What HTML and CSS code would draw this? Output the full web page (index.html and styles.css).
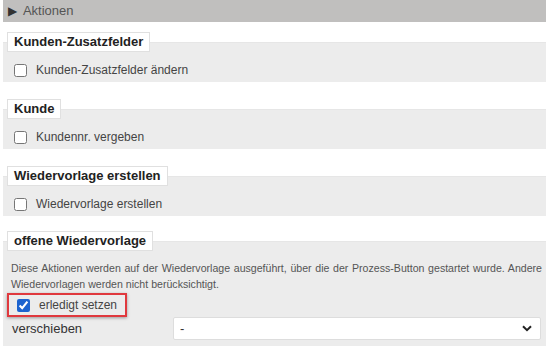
FILE: index.html
```html
<!DOCTYPE html>
<html lang="de">
<head>
  <meta charset="UTF-8" />
  <title>Aktionen</title>
  <link rel="stylesheet" href="styles.css">
</head>
<body>
  <div class="panel">
    <div class="panel-head"><span class="arrow">&#9654;</span> Aktionen</div>

    <div class="group group-first">
      <div class="legend">Kunden-Zusatzfelder</div>
      <div class="group-body">
        <label class="check-row"><input type="checkbox"> <span>Kunden-Zusatzfelder ändern</span></label>
      </div>
    </div>

    <div class="group">
      <div class="legend">Kunde</div>
      <div class="group-body">
        <label class="check-row"><input type="checkbox"> <span>Kundennr. vergeben</span></label>
      </div>
    </div>

    <div class="group">
      <div class="legend">Wiedervorlage erstellen</div>
      <div class="group-body">
        <label class="check-row"><input type="checkbox"> <span>Wiedervorlage erstellen</span></label>
      </div>
    </div>

    <div class="group group-last">
      <div class="legend">offene Wiedervorlage</div>
      <div class="group-body">
        <p class="hint">Diese Aktionen werden auf der Wiedervorlage ausgeführt, über die der Prozess-Button gestartet wurde. Andere Wiedervorlagen werden nicht berücksichtigt.</p>
        <div class="marked">
          <label class="check-row"><input type="checkbox" checked> <span>erledigt setzen</span></label>
        </div>
        <div class="field-row">
          <span class="field-label">verschieben</span>
          <div class="select-wrap">
            <select>
              <option>-</option>
            </select>
            <svg class="chevron" width="10" height="7" viewBox="0 0 10 7"><path d="M1 1.2 L5 5.2 L9 1.2" fill="none" stroke="#222" stroke-width="2"/></svg>
          </div>
        </div>
      </div>
    </div>
  </div>
</body>
</html>
```

FILE: styles.css
```css
body {
  margin: 0;
  font-family: 'Liberation Sans', Arial, sans-serif;
  color: #333;
  background: #fff;
}

.panel {
  margin-left: 3px;
}

.panel-head {
  height: 22px;
  line-height: 22px;
  background: #c0bfbe;
  color: #555;
  font-size: 13px;
  padding-left: 5px;
}

.panel-head .arrow {
  color: #333;
  font-size: 12px;
  margin-right: 3px;
}

.group {
  margin-top: 17px;
}

.group-first {
  margin-top: 10px;
}

.group-last {
  margin-top: 15px;
}

.legend {
  position: relative;
  z-index: 1;
  display: inline-block;
  margin-left: 4px;
  height: 18px;
  line-height: 18px;
  padding: 0 6px;
  background: #fff;
  border: 1px solid #e0e0e0;
  font-size: 13px;
  font-weight: bold;
  color: #222;
}

.group-body {
  margin-top: -10px;
  padding: 18px 4px 3px 8px;
  background: #ececec;
  border-top: 1px solid #e6e6e6;
}

.check-row {
  display: flex;
  align-items: center;
  gap: 9px;
  height: 18px;
  padding-left: 3px;
  font-size: 12px;
  color: #444;
}

.check-row input {
  margin: 0;
  width: 13px;
  height: 13px;
  accent-color: #1c63cf;
}

.hint {
  margin: 0;
  font-size: 10.6px;
  line-height: 16px;
  color: #555;
  text-align: justify;
}

.marked {
  display: inline-block;
  margin: 1px 0 0 -4px;
  padding: 1px 8px 1px 5px;
  border: 2px solid #e0393e;
  box-shadow: 0 1px 3px rgba(0, 0, 0, 0.35);
}

.field-row {
  display: grid;
  grid-template-columns: 161px 1fr;
  align-items: center;
  padding: 0 1px 3px 1px;
}

.field-label {
  font-size: 13px;
  color: #333;
}

.select-wrap {
  position: relative;
}

.select-wrap select {
  appearance: none;
  width: 100%;
  height: 23px;
  border: 1px solid #ddd;
  border-radius: 2px;
  background: #fff;
  font-family: 'Liberation Sans', Arial, sans-serif;
  font-size: 13px;
  color: #333;
  padding: 0 6px;
}

.chevron {
  position: absolute;
  right: 9px;
  top: 8px;
}
```
